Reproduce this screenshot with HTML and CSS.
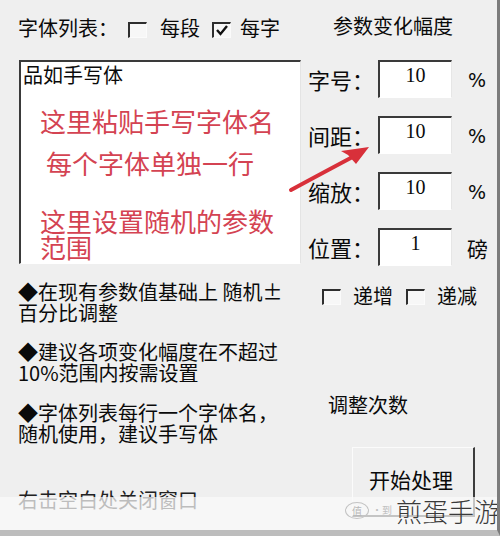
FILE: index.html
```html
<!DOCTYPE html>
<html lang="zh-CN">
<head>
<meta charset="utf-8">
<title>字体随机</title>
<link rel="stylesheet" href="styles.css">
</head>
<body>
<div class="window">
  <div class="header">
    <span class="title">字体列表：</span>
    <span class="chk chk-a"></span>
    <span class="opt">每段</span>
    <span class="chk chk-b"><svg class="tick" viewBox="0 0 16 13" width="16" height="13"><path d="M3 6 L6.5 10 L13 2" fill="none" stroke="#111" stroke-width="2.4"/></svg></span>
    <span class="opt opt-b">每字</span>
    <span class="group-title">参数变化幅度</span>
  </div>

  <div class="main">
    <div class="left">
      <div class="textarea">
        <div class="font-name">品如手写体</div>
        <div class="hint">
          <div class="hint-line">这里粘贴手写字体名</div>
          <div class="hint-line hint-indent">每个字体单独一行</div>
          <div class="hint-line hint-gap">这里设置随机的参数</div>
          <div class="hint-line">范围</div>
        </div>
      </div>
      <p class="note note-1">◆在现有参数值基础上 随机±<br>百分比调整</p>
      <p class="note note-2">◆建议各项变化幅度在不超过<br>10%范围内按需设置</p>
      <p class="note note-3">◆字体列表每行一个字体名，<br>随机使用，建议手写体</p>
      <p class="footer">右击空白处关闭窗口</p>
    </div>

    <div class="right">
      <div class="fields">
        <div class="field"><span class="label">字号：</span><span class="box">10</span><span class="unit">%</span></div>
        <div class="field"><span class="label">间距：</span><span class="box">10</span><span class="unit">%</span></div>
        <div class="field"><span class="label">缩放：</span><span class="box">10</span><span class="unit">%</span></div>
        <div class="field"><span class="label">位置：</span><span class="box">1</span><span class="unit unit-pt">磅</span></div>
      </div>
      <div class="steps">
        <span class="chk chk-c"></span><span class="opt opt-c">递增</span>
        <span class="chk chk-d"></span><span class="opt opt-c">递减</span>
      </div>
      <div class="count">调整次数</div>
      <div class="button">开始处理</div>
    </div>
  </div>

  <svg class="arrow" width="500" height="536" viewBox="0 0 500 536">
    <path d="M291 190 Q328 170 362 152" fill="none" stroke="#d8303a" stroke-width="4" stroke-linecap="round"/>
    <path d="M369 147 L341 151 L348 155 L356 164 Z" fill="#d8303a"/>
  </svg>

  <div class="watermark">
    <span class="wm-logo">值</span>
    <span class="wm-small">·到</span>
    <span class="wm-text">煎蛋手游</span>
  </div>
</div>
</body>
</html>
```
FILE: styles.css
```css
html, body {
  margin: 0;
  padding: 0;
}

body {
  background: #efefef;
}

.window {
  position: relative;
  width: 479px;
  height: 514px;
  padding: 16px 0 0 18px;
  background: #efefef;
  border-right: 3px solid #7c7c7c;
  border-bottom: 6px solid #bdbdbd;
  font-family: "Noto Sans CJK SC", "Noto Sans", sans-serif;
  color: #0a0a0a;
  overflow: hidden;
}

.header {
  display: flex;
  align-items: flex-start;
  height: 24px;
  font-size: 20px;
  line-height: 20px;
}

.title,
.opt {
  margin-top: 2px;
}

.chk {
  display: inline-block;
  box-sizing: border-box;
  width: 19px;
  height: 16px;
  background: #f7f7f7;
  border-top: 2px solid #2e2e2e;
  border-left: 2px solid #2e2e2e;
  border-right: 1px solid #fbfbfb;
  border-bottom: 1px solid #fbfbfb;
  position: relative;
}

.chk-a {
  margin: 6px 0 0 10px;
}

.opt {
  margin-left: 13px;
}

.chk-b {
  margin: 6px 0 0 12px;
}

.tick {
  position: absolute;
  left: 0;
  top: 0;
}

.opt-b {
  margin-left: 9px;
}

.group-title {
  margin-left: 53px;
  margin-top: 0;
}

.main {
  display: flex;
  margin-top: 20px;
}

.left {
  width: 282px;
  margin-left: 1px;
  flex: none;
}

.textarea {
  box-sizing: border-box;
  height: 204px;
  background: #ffffff;
  border-top: 2px solid #3a3a3a;
  border-left: 2px solid #3a3a3a;
  border-right: 1px solid #e4e4e4;
  border-bottom: 1px solid #ffffff;
  padding: 3px 0 0 2px;
}

.font-name {
  font-size: 20px;
  line-height: 20px;
}

.hint {
  margin-top: 23px;
  padding-left: 17px;
  font-size: 26px;
  line-height: 26px;
  color: #d44352;
  white-space: nowrap;
}

.hint-indent {
  margin-top: 16px;
  padding-left: 6px;
}

.hint-gap {
  margin-top: 32px;
}

.note {
  margin: 18px 0 0 -1px;
  font-size: 20px;
  line-height: 21px;
  white-space: nowrap;
}

.note-1 {
  margin-top: 17px;
}

.note-3 {
  margin-top: 19px;
}

.footer {
  margin: 46px 0 0 -1px;
  font-size: 20px;
  line-height: 20px;
  color: #222;
}

.right {
  flex: 1;
  padding-left: 7px;
}

.fields {
  display: flex;
  flex-direction: column;
  gap: 18px;
}

.field {
  display: flex;
  align-items: center;
  height: 38px;
}

.label {
  width: 70px;
  font-size: 22px;
  line-height: 22px;
}

.box {
  box-sizing: border-box;
  width: 74px;
  height: 38px;
  align-self: flex-start;
  background: #ffffff;
  border-top: 2px solid #3a3a3a;
  border-left: 2px solid #3a3a3a;
  border-right: 1px solid #e6e6e6;
  border-bottom: 1px solid #ffffff;
  padding-top: 3px;
  text-align: center;
  font-family: "Liberation Serif", "DejaVu Serif", serif;
  font-size: 20px;
  line-height: 20px;
}

.unit {
  margin-left: 16px;
  font-family: "DejaVu Sans", sans-serif;
  font-size: 19px;
  line-height: 22px;
  margin-top: 2px;
}

.unit-pt {
  font-family: "Noto Sans CJK SC", sans-serif;
  font-size: 21px;
  margin-left: 15px;
}

.steps {
  display: flex;
  align-items: flex-start;
  margin-top: 20px;
  font-size: 20px;
  line-height: 20px;
}

.chk-c {
  margin: 3px 0 0 14px;
}

.steps .chk-d {
  margin: 3px 0 0 13px;
}

.opt-c {
  margin: 0 0 0 12px;
}

.count {
  margin: 89px 0 0 20px;
  font-size: 20px;
  line-height: 20px;
}

.button {
  box-sizing: border-box;
  width: 123px;
  height: 70px;
  margin: 32px 0 0 44px;
  padding-top: 19px;
  padding-left: 16px;
  background: #efefef;
  border-top: 1px solid #fbfbfb;
  border-left: 1px solid #fbfbfb;
  border-right: 2px solid #3c3c3c;
  border-bottom: 2px solid #3c3c3c;
  font-size: 21px;
  line-height: 24px;
}

.arrow {
  position: absolute;
  left: 0;
  top: 0;
  pointer-events: none;
}

.watermark {
  position: absolute;
  left: 0;
  right: -3px;
  top: 497px;
  height: 33px;
  display: flex;
  align-items: flex-start;
  justify-content: flex-end;
  background: rgba(250, 250, 250, 0.72);
}

.wm-logo {
  margin-top: 5px;
  width: 22px;
  height: 15px;
  border: 1px solid #c4c4c4;
  border-radius: 50%;
  font-size: 10px;
  line-height: 15px;
  text-align: center;
  color: #b8b8b8;
}

.wm-small {
  margin: 7px 0 0 3px;
  font-size: 10px;
  line-height: 12px;
  color: #c0c0c0;
}

.wm-text {
  margin-left: 4px;
  font-size: 26px;
  line-height: 26px;
  margin-top: 1px;
  color: #3a3a3a;
  font-weight: 300;
}
```
